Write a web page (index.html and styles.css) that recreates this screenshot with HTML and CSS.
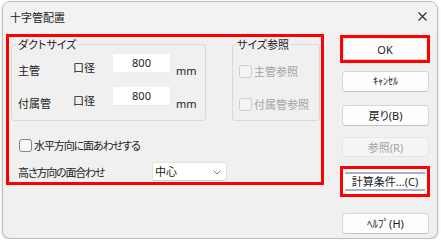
FILE: index.html
```html
<!DOCTYPE html>
<html lang="ja">
<head>
<meta charset="utf-8">
<title>十字管配置</title>
<link rel="stylesheet" href="styles.css">
</head>
<body>
<div class="window">
  <div class="titlebar">
    <span class="title">十字管配置</span>
    <span class="close"><svg width="9" height="9" viewBox="0 0 9 9"><path d="M0.5 0.5 L8.5 8.5 M8.5 0.5 L0.5 8.5" stroke="#2b2b2b" stroke-width="1.1" fill="none"/></svg></span>
  </div>
  <div class="body">
    <div class="main annot">
      <div class="groups">
        <fieldset class="group g-size">
          <legend>ダクトサイズ</legend>
          <div class="row r1">
            <span class="lbl-name">主管</span>
            <span class="lbl-dia">口径</span>
            <span class="input">800</span>
            <span class="unit">mm</span>
          </div>
          <div class="row r2">
            <span class="lbl-name">付属管</span>
            <span class="lbl-dia">口径</span>
            <span class="input">800</span>
            <span class="unit">mm</span>
          </div>
        </fieldset>
        <fieldset class="group g-ref">
          <legend>サイズ参照</legend>
          <div class="chk-row ref1 disabled"><span class="box"></span><span class="chk-text">主管参照</span></div>
          <div class="chk-row ref2 disabled"><span class="box"></span><span class="chk-text">付属管参照</span></div>
        </fieldset>
      </div>
      <div class="chk-row main-chk"><span class="box"></span><span class="chk-text">水平方向に面あわせする</span></div>
      <div class="sel-row">
        <span class="sel-lbl">高さ方向の面合わせ</span>
        <div class="select"><span>中心</span><svg class="chev" width="8" height="5" viewBox="0 0 8 5"><path d="M0.5 0.5 L4 4 L7.5 0.5" stroke="#7a7a7a" stroke-width="1" fill="none"/></svg></div>
      </div>
    </div>
    <div class="buttons">
      <div class="annot ok-box"><div class="btn btn-ok">OK</div></div>
      <div class="btn b-cancel">ｷｬﾝｾﾙ</div>
      <div class="btn b-back">戻り(B)</div>
      <div class="btn b-ref disabled">参照(R)</div>
      <div class="annot calc-box"><div class="btn btn-calc">計算条件...(C)</div></div>
      <div class="btn b-help">ﾍﾙﾌﾟ(H)</div>
    </div>
  </div>
</div>
</body>
</html>
```

FILE: styles.css
```css
* { box-sizing: border-box; }
html, body { margin: 0; padding: 0; background: #ffffff; }
body {
  font-family: "Noto Sans", "Noto Sans CJK JP", sans-serif;
  font-size: 11px;
  line-height: 15px;
  color: #1b1b1b;
  font-feature-settings: "palt";
}
.window {
  margin: 1px 0 0 2px;
  width: 436px;
  height: 238px;
  border: 1px solid #bcbcbc;
  border-radius: 8px;
  background: #f0f0f0;
  box-shadow: 0 1px 3px rgba(0,0,0,0.18);
  overflow: hidden;
}
.titlebar {
  height: 32px;
  display: flex;
  justify-content: space-between;
  align-items: flex-start;
  background: #f2f2f2;
}
.title { margin: 8px 0 0 7px; font-size: 11px; }
.close { margin: 10px 10px 0 0; display: flex; }
.body { display: flex; padding-left: 3px; }
.annot { border: 3px solid #ff0000; }
.main {
  width: 318px;
  height: 151px;
  display: flex;
  flex-direction: column;
}
.groups { display: flex; }
.group {
  margin: 0;
  padding: 0;
  min-inline-size: 0;
  border: 1px solid #d9d9d9;
  border-radius: 3px;
  height: 84px;
}
.group legend { padding: 0 2px; line-height: 15px; }
.g-size { margin-left: 2px; width: 195px; }
.g-size legend { margin-left: 4px; }
.g-ref { margin-left: 26px; width: 88px; }
.g-ref legend { margin-left: 2px; }
.row { display: flex; align-items: flex-start; height: 19px; padding-left: 6px; }
.r1 { margin-top: 2px; }
.r2 { margin-top: 14px; }
.lbl-name { width: 55px; margin-top: 9px; }
.lbl-dia { width: 40px; margin-top: 6px; }
.input {
  width: 57px;
  height: 19px;
  background: #ffffff;
  border-bottom: 1px solid #ececec;
  text-align: center;
  line-height: 18px;
  font-size: 11px;
}
.unit { margin: 9px 0 0 6px; }
.chk-row { display: flex; align-items: center; height: 13px; }
.box {
  width: 13px;
  height: 13px;
  border: 1px solid #858585;
  border-radius: 3px;
  background: #f9f9f9;
  flex: none;
}
.chk-text { margin-left: 2px; }
.disabled .box { border-color: #cfcfcf; background: #f3f3f3; }
.chk-row.disabled { color: #a3a3a3; }
.ref1 { margin-top: 13px; padding-left: 6px; }
.ref2 { margin-top: 20px; padding-left: 6px; }
.main-chk { margin-top: 18px; padding-left: 10px; }
.main-chk .chk-text { letter-spacing: -1.1px; }
.sel-row { display: flex; align-items: center; height: 19px; margin-top: 10px; padding-left: 9px; }
.sel-lbl { width: 134px; padding-top: 2px; letter-spacing: -1.2px; }
.select {
  width: 75px;
  height: 19px;
  background: #ffffff;
  border: 1px solid #e2e2e2;
  border-bottom-color: #cfcfcf;
  border-radius: 3px;
  display: flex;
  align-items: center;
  justify-content: space-between;
  padding: 0 5px 0 2px;
}
.chev { margin-top: 1px; }
.buttons { width: 90px; margin-left: 16px; display: flex; flex-direction: column; }
.btn {
  height: 21px;
  margin-left: 2px;
  width: 87px;
  background: #fdfdfd;
  border: 1px solid #d6d6d6;
  border-bottom-color: #c2c2c2;
  border-radius: 4px;
  display: flex;
  align-items: center;
  justify-content: center;
  color: #1b1b1b;
}
.ok-box { margin-top: 1px; height: 28px; }
.btn-ok { margin: 0; width: 84px; height: 22px; border-color: #e4e4e4; border-bottom-color: #cfcfcf; border-radius: 2px; }
.b-cancel { margin-top: 8px; font-size: 10px; }
.b-back { margin-top: 13px; }
.b-ref { margin-top: 11px; height: 20px; background: #f5f5f5; border-color: #e6e6e6; color: #a3a3a3; }
.calc-box { margin-top: 9px; height: 31px; background: #ffffff; padding: 3px 2px; }
.btn-calc {
  margin: 0;
  width: 100%;
  height: 19px;
  border: none;
  border-top: 2px solid #a9b4bf;
  border-bottom: 2px solid #a9b4bf;
  border-radius: 0;
  background: #ffffff;
}
.b-help { margin-top: 16px; }
```
